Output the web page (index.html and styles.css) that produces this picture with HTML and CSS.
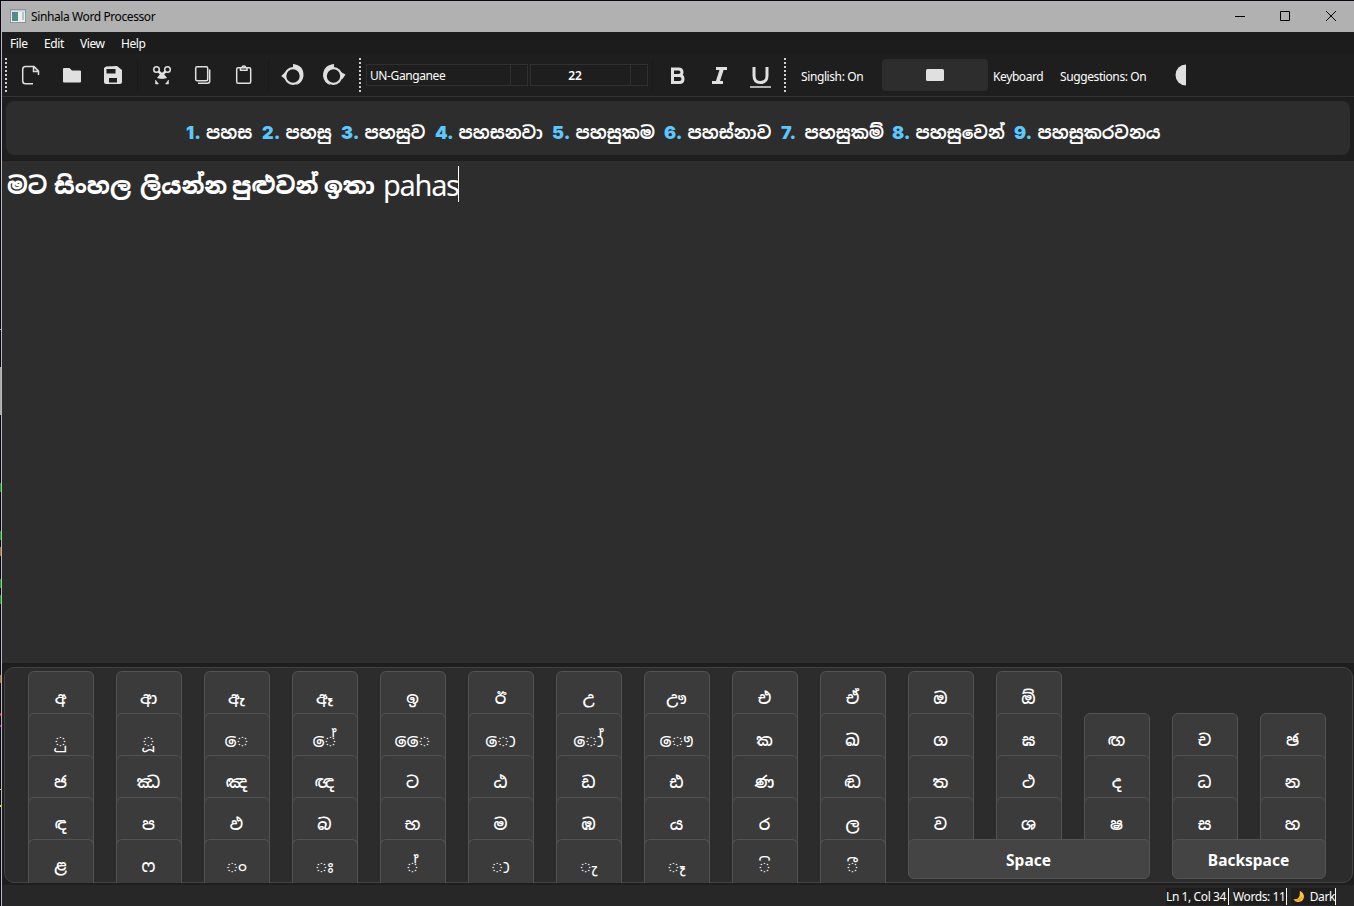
FILE: index.html
```html
<!DOCTYPE html>
<html lang="si">
<head>
<meta charset="utf-8">
<title>Sinhala Word Processor</title>
<link rel="stylesheet" href="styles.css">
</head>
<body>
<div class="desktop">
<div class="behind"></div>
<div class="window">
  <header class="titlebar">
    <svg class="app-icon" width="16" height="14" viewBox="0 0 16 14"><rect x=".5" y=".5" width="15" height="13" fill="#eee" stroke="#8d9199"/><rect x="1" y="1" width="14" height="1.5" fill="#c9ccd4"/><rect x="2" y="3" width="6" height="9" fill="#4c9086"/><path d="M2 3h3v3h-3z" fill="#527fb0"/><rect x="12" y="3" width="2" height="8" fill="#a5cdc6"/></svg>
    <span class="title">Sinhala Word Processor</span>
    <svg class="win-controls" width="103" height="12" viewBox="0 0 103 12" fill="none" stroke="#000"><path d="M0 6.500h10M45.500 1.500h9v9h-9zM91 1l10 10M101 1l-10 10"/></svg>
  </header>
  <nav class="menubar"><span class="m1">File</span><span class="m2">Edit</span><span class="m3">View</span><span class="m4">Help</span></nav>
  <div class="toolbar">
    <i class="grip g1"></i>
    <svg class="icons" width="352" height="42" viewBox="0 0 352 42" fill="none" stroke="#e0e0e0" stroke-width="1.500">
      <path d="M130.500 5v33M261.500 5v33" stroke="#191919" stroke-width="1"/>
      <path d="M26 29.700h-7.500q-2.800 0-2.800-2.800v-11.500q0-2.800 2.800-2.800h8.500l4.500 4.500v4M26.500 12.500v5h5"/>
      <path d="M56 15q0-1 1-1h5.500l2.500 2.500h8q1 0 1 1v10q0 1-1 1h-16q-1 0-1-1z" fill="#e0e0e0" stroke="none"/>
      <path fill-rule="evenodd" d="M97 14l2-1.500 11-.5 5 4v12q0 2-2 2h-14q-2 0-2-2zM99.500 15v4.500h9v-4.500zM102 24v4.500h8v-4.500z" fill="#e0e0e0" stroke="none"/>
      <g><circle cx="149.500" cy="15.500" r="2.800"/><circle cx="160.500" cy="15.500" r="2.800"/><path d="M151.500 17.500l3.500 3M158.500 17.500l-3.500 3" stroke-width="2.400"/><path d="M150.500 23.800l3.200-4h2.600l3.200 4q-4.500 1.500-9 0z" fill="#e0e0e0" stroke-width=".8"/><path d="M148.500 30v-4l3 4zM161.500 30v-4l-3 4z" fill="#e0e0e0" stroke-width=".5"/></g>
      <rect x="188.700" y="12.700" width="12" height="14" rx="1.500"/><path d="M191 29.200h9.500q2.200 0 2.200-2.200v-11.500"/>
      <rect x="229.700" y="13.700" width="14" height="15.500" rx="1.500"/><path d="M233.500 14v2.200h6.500v-2.200M235 13.500q0-1.500 1.800-1.500t1.800 1.500"/>
      <g><circle cx="286" cy="22" r="7.800" stroke-width="2.200"/><path d="M286 14.500v-4.500q11 1 10.500 12-1 7-7.500 9.200 5.500-6 4.500-10-2-6-7.500-6.700zM279 17.500l-4.800 4.500 3.800 3z" fill="#e0e0e0" stroke="none"/></g>
      <g><circle cx="326.500" cy="22" r="7.800" stroke-width="2.200"/><path d="M327 14.500v-4.500q-11 1-11 12 1 7 7.500 9.200-5.500-6-4.500-10 2-6 8-6.700zM333.500 18l5 2.500-3 4.500-2-1z" fill="#e0e0e0" stroke="none"/></g>
    </svg>
    <i class="grip"></i>
    <div class="combo font"><span>UN-Ganganee</span></div>
    <div class="combo size"><span>22</span></div>
    <svg class="format" width="130" height="42" viewBox="0 0 130 42" fill="none" stroke="#e0e0e0">
      <path d="M4.500 5v33" stroke="#191919"/>
      <path d="M24.500 15h6q3.500 0 3.500 3.200t-3.500 3.300h-6zM24.500 21.500h7q3.500 0 3.500 3.500t-3.500 3.500h-7z" stroke-width="3"/>
      <path d="M68 14.500h11M64 28.500h11" stroke-width="3"/><path d="M74 14.500l-4.500 14" stroke-width="4"/>
      <path d="M106 13v8.500q0 7 6.500 7t6.500-7v-8.500" stroke-width="3"/><path d="M102 33h21" stroke-width="1.500"/>
    </svg>
    <i class="grip g3"></i>
    <span class="toggle t1">Singlish: On</span>
    <div class="kbd-btn"><svg width="18" height="12"><rect width="18" height="12" rx="1.500" fill="#e0e0e0"/></svg></div>
    <span class="toggle t2">Keyboard</span><span class="toggle t3">Suggestions: On</span>
    <svg class="theme" width="12" height="22"><path d="M11 .5a10.500 10.500 0 0 0 0 21z" fill="#e0e0e0"/></svg>
  </div>
  <section class="suggestions">
    <span class="s w1"><b>1.</b>පහස</span><span class="s w2"><b>2.</b>පහසු</span><span class="s w3"><b>3.</b>පහසුව</span><span class="s w4"><b>4.</b>පහසනවා</span><span class="s w5"><b>5.</b>පහසුකම</span><span class="s w6"><b>6.</b>පහස්නාව</span><span class="s w7"><b>7.</b>පහසුකම්</span><span class="s w8"><b>8.</b>පහසුවෙන්</span><span class="s w9"><b>9.</b>පහසුකරවනය</span>
  </section>
  <main class="editor"><span class="e1">මට</span><span class="e2">සිංහල</span><span class="e3">ලියන්න</span><span class="e4">පුළුවන්</span><span class="e5">ඉතා</span><span class="latin">pahas</span><i class="caret"></i></main>
  <section class="keyboard">
    <div class="key">අ</div><div class="key">ආ</div><div class="key">ඇ</div><div class="key">ඈ</div><div class="key">ඉ</div><div class="key">ඊ</div><div class="key">උ</div><div class="key">ඌ</div><div class="key">එ</div><div class="key">ඒ</div><div class="key">ඔ</div><div class="key">ඕ</div>
    <div class="key sign row2">&#x25CC;ු</div><div class="key sign">&#x25CC;ූ</div><div class="key sign">&#x25CC;ෙ</div><div class="key sign">&#x25CC;ේ</div><div class="key sign">&#x25CC;ෛ</div><div class="key sign">&#x25CC;ො</div><div class="key sign">&#x25CC;ෝ</div><div class="key sign">&#x25CC;ෞ</div><div class="key">ක</div><div class="key">ඛ</div><div class="key">ග</div><div class="key">ඝ</div><div class="key">ඟ</div><div class="key">ච</div><div class="key">ඡ</div>
    <div class="key">ජ</div><div class="key">ඣ</div><div class="key">ඤ</div><div class="key">ඥ</div><div class="key">ට</div><div class="key">ඨ</div><div class="key">ඩ</div><div class="key">ඪ</div><div class="key">ණ</div><div class="key">ඬ</div><div class="key">ත</div><div class="key">ථ</div><div class="key">ද</div><div class="key">ධ</div><div class="key">න</div>
    <div class="key">ඳ</div><div class="key">ප</div><div class="key">ඵ</div><div class="key">බ</div><div class="key">භ</div><div class="key">ම</div><div class="key">ඹ</div><div class="key">ය</div><div class="key">ර</div><div class="key">ල</div><div class="key">ව</div><div class="key">ශ</div><div class="key">ෂ</div><div class="key">ස</div><div class="key">හ</div>
    <div class="key last">ළ</div><div class="key last">ෆ</div><div class="key sign last">&#x25CC;ං</div><div class="key sign last">&#x25CC;ඃ</div><div class="key sign last">&#x25CC;්</div><div class="key sign last">&#x25CC;ා</div><div class="key sign last">&#x25CC;ැ</div><div class="key sign last">&#x25CC;ෑ</div><div class="key sign last">&#x25CC;ි</div><div class="key sign last">&#x25CC;ී</div><div class="key wide space"><span>Space</span></div><div class="key wide back"><span>Backspace</span></div>
  </section>
  <footer class="statusbar">
    <span class="st a">Ln 1, Col 34</span><span class="st b">Words: 11</span><span class="st c"><svg width="13" height="13" viewBox="0 0 13 13"><path d="M7.500.5a6.200 6.200 0 1 1-7 9q8 1 7-9z" fill="#fdc436"/><path d="M1 9.500q6.500 2 9.500-4-.5 5.500-4.500 6-3 0-5-2z" fill="#e9a01c"/></svg>Dark</span>
  </footer>
</div>
</div>
</body>
</html>
```
FILE: styles.css
```css
* { box-sizing: border-box; }
body { margin: 0; background: #0b0614; color: #fff; font-family: "Noto Sans", "Open Sans", "Noto Sans Sinhala", sans-serif; font-size: 12px; letter-spacing: -0.4px; overflow: hidden; }
.desktop { display: flex; width: 1354px; height: 906px; padding-top: 1px; }
.behind { width: 2px; flex: none; border-right: 1px solid #b9b9b9; background: linear-gradient(transparent 328px, #8ab 328px, #8ab 329px, transparent 329px, transparent 366px, #aaa 366px, #aaa 414px, transparent 414px, transparent 482px, #0a0 482px, #0a0 491px, transparent 491px, transparent 530px, #0a0 530px, #0a0 539px, transparent 539px, transparent 546px, #a66a30 546px, #a66a30 555px, transparent 555px, transparent 578px, #0a0 578px, #0a0 587px, transparent 587px, transparent 594px, #0a0 594px, #0a0 603px, transparent 603px, transparent 674px, #a66a30 674px, #a66a30 682px, transparent 682px, transparent 712px, #d02050 712px, #d02050 715px, transparent 715px, transparent 724px, #d0d 724px, #d0d 726px, transparent 726px, transparent 788px, #dd0 788px, #dd0 789px, transparent 789px, transparent 804px, #dd0 804px, #dd0 806px, transparent 806px); }
.window { width: 1352px; height: 905px; background: #1e1e1e; display: flex; flex-direction: column; }
.titlebar { height: 31px; flex: none; background: #b1b1b1; color: #000; display: flex; align-items: center; padding: 0 16px 0 8px; }
.app-icon { margin-right: 5px; margin-top: -1px; }
.title { flex: 1; letter-spacing: -0.4px; }
.win-controls { margin-top: -1px; }
.menubar { height: 22px; flex: none; display: flex; padding-left: 8px; line-height: 24px; background: #1c1c1c; }
.m1 { width: 34px; } .m2 { width: 36px; } .m3 { width: 41px; }
.toolbar { height: 43px; flex: none; display: flex; align-items: center; border-bottom: 1px solid #333; }
.grip { width: 2px; height: 34px; flex: none; margin-top: -1px; background: repeating-linear-gradient(#d0d0d0 0 2px, transparent 2px 4px); }
.g1 { margin-left: 3px; }
.icons { flex: none; margin-top: -1px; }
.combo { height: 22px; margin-left: 5px; border: 1px solid #303030; display: flex; align-items: center; flex: none; }
.combo::after { content: ""; width: 16px; height: 20px; border-left: 1px solid #303030; }
.combo span { flex: 1; }
.font { width: 162px; padding-left: 3px; }
.size { width: 118px; margin-left: 2px; font-weight: 600; text-align: center; letter-spacing: 0; }
.size span { margin-left: -11px; }
.format { margin-left: 0; margin-top: -1px; flex: none; }
.g3 { margin-left: 6px; }
.toggle { flex: none; padding-top: 3px; white-space: nowrap; }
.t1 { margin-left: 15px; width: 81px; }
.kbd-btn { width: 106px; height: 32px; border-radius: 4px; background: #2d2d2d; display: grid; place-items: center; }
.t2 { margin-left: 5px; width: 67px; }
.t3 { width: 115px; }
.suggestions { height: 54px; flex: none; margin: 4px 4px 0; border-radius: 8px; background: #2d2d2d; display: flex; align-items: center; padding: 10px 0 0 180px; font-size: 17.3px; font-weight: 700; white-space: nowrap; letter-spacing: 0; }
.s { flex: none; line-height: 26px; }
.s b { display: inline-block; width: 23.5px; color: #5bc8ff; font-family: Inter, sans-serif; font-size: 18px; }
.w1 b { width: 20px; }
.w1 { width: 76px; } .w2 { width: 79px; } .w3 { width: 94px; } .w4 { width: 117px; } .w5 { width: 112px; } .w6 { width: 117px; } .w7 { width: 111px; } .w8 { width: 122px; }
.editor { height: 502px; flex: none; margin-top: 6px; background: #2d2d2d; display: flex; padding: 5px 0 0 5px; font-size: 23.2px; font-weight: 800; line-height: 39px; white-space: nowrap; letter-spacing: 0; }
.editor span { flex: none; }
.e1 { width: 47px; } .e2 { width: 86px; } .e3 { width: 92px; } .e4 { width: 92px; } .e5 { width: 59px; }
.editor .latin { font-weight: 400; width: 75px; font-size: 29px; line-height: 37px; letter-spacing: -1.3px; }
.caret { width: 1px; height: 36px; background: #fff; }
.keyboard { height: 216px; flex: none; margin: 4px 1px 0 2px; border: 1px solid #424242; border-radius: 10px; background: #2c2c2c; display: grid; grid-template-columns: repeat(15, 66px); grid-template-rows: repeat(5, 42px); column-gap: 22px; padding: 3px 0 0 23px; letter-spacing: 0; }
.key { height: 54px; border: 1px solid #535353; border-radius: 6px; background: #3b3b3b; text-align: center; line-height: 52px; font-size: 16px; font-weight: 600; padding-right: 1px; }
.sign { font-size: 19px; font-weight: 400; }
.row2 { grid-column: 1; }
.last { height: 44px; border-bottom: 0; border-radius: 6px 6px 0 0; }
.wide { height: 40px; line-height: 40px; background: #444; font-size: 15.5px; font-weight: 700; }
.space { grid-column: 11 / 14; }
.back { grid-column: 14 / 16; }
.statusbar { height: 21px; flex: none; margin-top: 2px; background: #272727; display: flex; justify-content: flex-end; padding: 3px 18px 0 0; line-height: 18px; }
.st { height: 17px; border-right: 1px solid #fff; background: #1e1e1e; white-space: nowrap; display: flex; align-items: center; }
.a { width: 63px; } .b { width: 54px; margin-left: 4px; } .c { width: 45px; margin-left: 4px; gap: 5px; padding-left: 2px; }
```
